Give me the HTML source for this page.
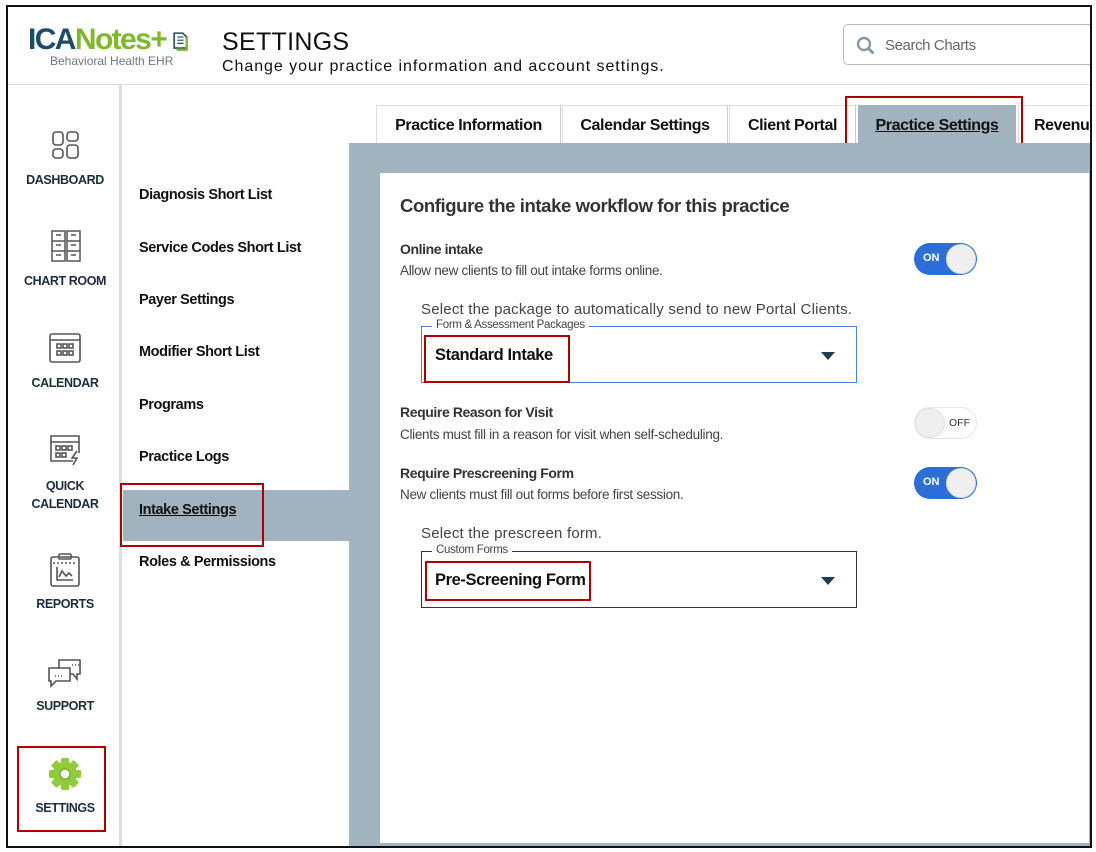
<!DOCTYPE html>
<html><head><meta charset="utf-8">
<style>
*{margin:0;padding:0;box-sizing:border-box}
body{width:1096px;height:852px;background:#fff;position:relative;overflow:hidden;font-family:"Liberation Sans",sans-serif;color:#111}
.a{position:absolute}
.frame{left:6px;top:5px;width:1086px;height:843px;border:2px solid #111;z-index:20}
.nav{left:8px;top:85px;width:114px;height:761px;background:#fff;border-right:3px solid #ddd}
.navi{position:absolute;left:0;width:114px;text-align:center;font-size:12.5px;font-weight:bold;color:#1d2d3c;letter-spacing:-0.4px}
.sub{font-size:14.5px;font-weight:bold;color:#111;left:139px;letter-spacing:-0.4px}
.tab{top:105px;height:39px;background:#fff;border-top:1px solid #ddd;border-left:1px solid #ddd;border-right:1px solid #ccc;font-size:16px;font-weight:bold;text-align:center;line-height:40px;letter-spacing:-0.4px}
.red{border:2px solid #b00000}
.lbl{font-size:14px;font-weight:bold;color:#333;letter-spacing:-0.4px}
.desc{font-size:13.5px;color:#444;letter-spacing:-0.3px}
.tog{width:63px;height:32px;border-radius:16px}
.knob{position:absolute;top:1px;width:30px;height:30px;border-radius:50%;background:#efefef;border:1px solid #d7dde5}
.box{left:421px;width:436px;height:57px}
.legend{position:absolute;top:-8px;left:10px;background:#fff;padding:0 4px;font-size:11.5px;color:#444;letter-spacing:-0.3px}
.tri{position:absolute;right:21px;top:25px;width:0;height:0;border-left:7px solid transparent;border-right:7px solid transparent;border-top:8px solid #1f3d50}
</style></head><body>
<div class="a frame"></div>
<div class="a" style="left:1092px;top:0;width:10px;height:852px;background:#fff;z-index:19"></div>
<!-- header -->
<div class="a" style="left:8px;top:84px;width:1082px;height:1px;background:#ddd"></div>
<div class="a" style="left:28px;top:22px;font-size:30px;font-weight:bold;letter-spacing:-1.6px;line-height:36px;z-index:2"><span style="color:#1b4d66">ICA</span><span style="color:#7db928">Notes+</span></div>
<svg class="a" style="left:171px;top:29px" width="22" height="24" viewBox="0 0 28 26"><path d="M4 3h11l5 5v14H4z" fill="none" stroke="#1b4d66" stroke-width="2"/><path d="M8 8h8M8 12h8M8 16h8" stroke="#1b4d66" stroke-width="1.5"/><path d="M20 8v16H7" stroke="#7db928" stroke-width="3" fill="none"/></svg>
<div class="a" style="left:50px;top:54px;font-size:12px;color:#6b7780">Behavioral Health EHR</div>
<div class="a" style="left:222px;top:28px;font-size:25px;color:#111;letter-spacing:0.3px">SETTINGS</div>
<div class="a" style="left:222px;top:58px;font-size:16px;color:#111;letter-spacing:0.95px">Change your practice information and account settings.</div>
<div class="a" style="left:843px;top:24px;width:260px;height:41px;border:1px solid #bbb;border-radius:5px"></div>
<svg class="a" style="left:856px;top:36px" width="20" height="20" viewBox="0 0 20 20"><circle cx="8" cy="8" r="6" fill="none" stroke="#8a99a6" stroke-width="2.4"/><path d="M12.5 12.5l5 5" stroke="#8a99a6" stroke-width="2.8"/></svg>
<div class="a" style="left:885px;top:37px;font-size:15px;color:#666;letter-spacing:-0.4px">Search Charts</div>
<!-- left nav -->
<div class="a nav">
<svg class="a" style="left:44px;top:46px" width="27" height="28" viewBox="0 0 27 28" fill="none" stroke="#555" stroke-width="1.6"><rect x="1" y="1" width="10" height="13" rx="3"/><rect x="15" y="1" width="11" height="9" rx="3"/><rect x="1" y="18" width="10" height="9" rx="3"/><rect x="15" y="14" width="11" height="13" rx="3"/></svg>
<div class="navi" style="top:88px">DASHBOARD</div>
<svg class="a" style="left:43px;top:145px" width="30" height="34" viewBox="0 0 30 34" fill="none" stroke="#555" stroke-width="1.5"><rect x="1" y="1" width="13" height="30"/><rect x="16" y="1" width="13" height="30"/><path d="M1 11h13M1 21h13M16 11h13M16 21h13M5 5h5M5 15h5M5 25h5M20 5h5M20 15h5M20 25h5"/></svg>
<div class="navi" style="top:189px">CHART ROOM</div>
<svg class="a" style="left:41px;top:247px" width="32" height="32" viewBox="0 0 32 32" fill="none" stroke="#555" stroke-width="1.6"><rect x="1" y="2" width="30" height="28" rx="2"/><path d="M1 8h30"/><rect x="8" y="12" width="4" height="4"/><rect x="14" y="12" width="4" height="4"/><rect x="20" y="12" width="4" height="4"/><rect x="8" y="19" width="4" height="4"/><rect x="14" y="19" width="4" height="4"/><rect x="20" y="19" width="4" height="4"/></svg>
<div class="navi" style="top:291px">CALENDAR</div>
<svg class="a" style="left:41px;top:348px" width="32" height="34" viewBox="0 0 32 34" fill="none" stroke="#555" stroke-width="1.6"><path d="M24 28H2V3h28v17"/><path d="M2 9h28"/><rect x="7" y="13" width="4" height="4"/><rect x="13" y="13" width="4" height="4"/><rect x="19" y="13" width="4" height="4"/><rect x="7" y="20" width="4" height="4"/><rect x="13" y="20" width="4" height="4"/><path d="M28 18l-5 7h5l-4 7"/></svg>
<div class="navi" style="top:392px;line-height:18px">QUICK<br>CALENDAR</div>
<svg class="a" style="left:42px;top:468px" width="30" height="34" viewBox="0 0 30 34" fill="none" stroke="#555" stroke-width="1.6"><rect x="1" y="4" width="28" height="29" rx="2"/><rect x="9" y="1" width="12" height="5" rx="1"/><path d="M3 10h24" stroke-dasharray="2 2"/><path d="M7 14v13h16M9 24l3-6 4 5 3-3 3 3"/></svg>
<div class="navi" style="top:512px">REPORTS</div>
<svg class="a" style="left:39px;top:573px" width="36" height="32" viewBox="0 0 36 32" fill="none" stroke="#555" stroke-width="1.6"><path d="M12 2h21v14h-3v5l-4-5H12z"/><path d="M2 10h21v13H9l-5 5v-5H2z" fill="#fff"/><path d="M25 7h1M28 7h1M31 7h1M8 18h1M11 18h1M14 18h1"/></svg>
<div class="navi" style="top:614px">SUPPORT</div>
<svg class="a" style="left:40px;top:672px" width="34" height="34" viewBox="0 0 34 34"><g fill="#8fcb3c" transform="translate(17 17)"><circle r="12"/><rect x="-4" y="-16" width="8" height="32" rx="1.5"/><rect x="-4" y="-16" width="8" height="32" rx="1.5" transform="rotate(45)"/><rect x="-4" y="-16" width="8" height="32" rx="1.5" transform="rotate(90)"/><rect x="-4" y="-16" width="8" height="32" rx="1.5" transform="rotate(135)"/></g><circle cx="17" cy="17" r="5" fill="#fff" stroke="#6fa82a" stroke-width="1.3"/></svg>
<div class="navi" style="top:716px">SETTINGS</div>
</div>
<div class="a red" style="left:17px;top:746px;width:89px;height:86px"></div>
<!-- submenu -->
<div class="a" style="left:123px;top:490px;width:226px;height:51px;background:#a0b3bf"></div>
<div class="a sub" style="top:187px">Diagnosis Short List</div>
<div class="a sub" style="top:240px">Service Codes Short List</div>
<div class="a sub" style="top:292px">Payer Settings</div>
<div class="a sub" style="top:344px">Modifier Short List</div>
<div class="a sub" style="top:397px">Programs</div>
<div class="a sub" style="top:449px">Practice Logs</div>
<div class="a sub" style="top:502px;text-decoration:underline">Intake Settings</div>
<div class="a sub" style="top:554px">Roles &amp; Permissions</div>
<div class="a red" style="left:120px;top:483px;width:144px;height:64px"></div>
<!-- tabs -->
<div class="a tab" style="left:376px;width:185px">Practice Information</div>
<div class="a tab" style="left:562px;width:166px">Calendar Settings</div>
<div class="a tab" style="left:729px;width:127px">Client Portal</div>
<div class="a tab" style="left:858px;width:158px;background:#a0b3bf;border-color:#a0b3bf"><span style="text-decoration:underline">Practice Settings</span></div>
<div class="a tab" style="left:1018px;width:80px;text-align:left;padding-left:15px;border-right:none">Revenue</div>
<div class="a red" style="left:845px;top:96px;width:178px;height:57px"></div>
<!-- panel -->
<div class="a" style="left:349px;top:143px;width:741px;height:703px;background:#a0b3bf"></div>
<div class="a" style="left:380px;top:173px;width:709px;height:670px;background:#fff"></div>
<div class="a" style="left:400px;top:195px;font-size:18.5px;font-weight:bold;color:#333;letter-spacing:-0.4px">Configure the intake workflow for this practice</div>
<div class="a lbl" style="left:400px;top:241px">Online intake</div>
<div class="a desc" style="left:400px;top:263px">Allow new clients to fill out intake forms online.</div>
<div class="a tog" style="left:914px;top:243px;background:#2a6fd6"><span class="a" style="left:9px;top:9px;color:#fff;font-size:11px;font-weight:bold">ON</span><div class="knob" style="left:32px"></div></div>
<div class="a" style="left:421px;top:301px;font-size:15px;color:#444;letter-spacing:0.2px">Select the package to automatically send to new Portal Clients.</div>
<div class="a box" style="top:326px;border:1px solid #4a86d6"><div class="legend">Form &amp; Assessment Packages</div><div class="tri"></div></div>
<div class="a" style="left:435px;top:346px;font-size:16.5px;font-weight:bold;letter-spacing:-0.4px">Standard Intake</div>
<div class="a red" style="left:424px;top:335px;width:146px;height:48px"></div>
<div class="a lbl" style="left:400px;top:404px">Require Reason for Visit</div>
<div class="a desc" style="left:400px;top:427px">Clients must fill in a reason for visit when self-scheduling.</div>
<div class="a tog" style="left:914px;top:407px;background:#fff;border:1px solid #e4e4e4"><div class="knob" style="left:0;top:0;border-color:#e0e0e0"></div><span class="a" style="left:34px;top:9px;color:#333;font-size:10.5px">OFF</span></div>
<div class="a lbl" style="left:400px;top:465px">Require Prescreening Form</div>
<div class="a desc" style="left:400px;top:487px">New clients must fill out forms before first session.</div>
<div class="a tog" style="left:914px;top:467px;background:#2a6fd6"><span class="a" style="left:9px;top:9px;color:#fff;font-size:11px;font-weight:bold">ON</span><div class="knob" style="left:32px"></div></div>
<div class="a" style="left:421px;top:525px;font-size:15px;color:#444;letter-spacing:0.2px">Select the prescreen form.</div>
<div class="a box" style="top:551px;border:1px solid #333"><div class="legend">Custom Forms</div><div class="tri"></div></div>
<div class="a" style="left:435px;top:571px;font-size:16.5px;font-weight:bold;letter-spacing:-0.4px">Pre-Screening Form</div>
<div class="a red" style="left:425px;top:561px;width:166px;height:40px"></div>
</body></html>
